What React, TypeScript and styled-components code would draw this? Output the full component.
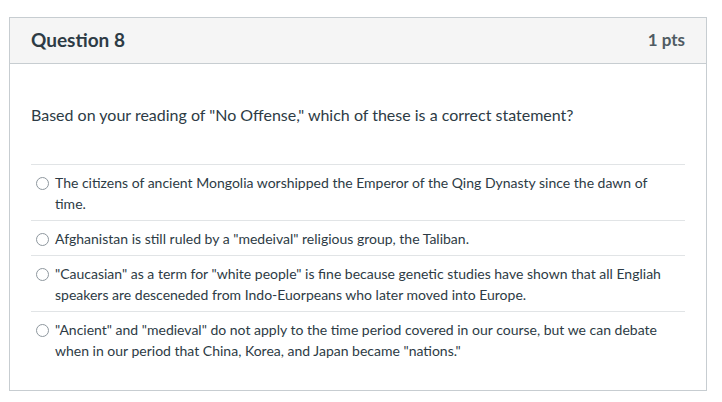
import { createGlobalStyle, styled } from 'styled-components';

const GlobalStyle = createGlobalStyle`
  body {
    margin: 0;
    background: #fff;
    font-family: Lato, 'Open Sans', sans-serif;
    color: #2d3b45;
  }
`;

const Page = styled.div`
  padding: 17px 15px 0 9px;
`;

const Card = styled.div`
  border: 1px solid #c7cdd1;
  height: 374px;
  box-sizing: border-box;
`;

const Header = styled.div`
  display: flex;
  justify-content: space-between;
  align-items: center;
  height: 45px;
  padding: 0 21px;
  background: #f5f5f5;
  border-bottom: 1px solid #c7cdd1;
`;

const Title = styled.h2`
  margin: 0 0 2px;
  font-size: 19px;
  font-weight: 700;
`;

const Points = styled.span`
  margin-bottom: 2px;
  font-size: 17px;
  font-weight: 700;
  color: #4f5b63;
`;

const Body = styled.div`
  padding: 40px 21px 0;
`;

const Prompt = styled.p`
  margin: 0 0 38px;
  font-size: 16px;
  line-height: 22px;
`;

const Answers = styled.div`
  border-top: 1px solid #e1e4e6;
`;

const Answer = styled.label`
  display: flex;
  align-items: flex-start;
  gap: 6px;
  padding: 7px 18px 6px 5px;
  border-bottom: 1px solid #e1e4e6;
  font-size: 14px;
  line-height: 21px;
  &:last-child {
    border-bottom: 0;
  }
`;

const Radio = styled.span`
  flex: none;
  box-sizing: border-box;
  width: 13px;
  height: 13px;
  margin-top: 5px;
  border: 1px solid #8e979e;
  border-radius: 50%;
  background: #fff;
`;

const answers = [
  'The citizens of ancient Mongolia worshipped the Emperor of the Qing Dynasty since the dawn of time.',
  'Afghanistan is still ruled by a "medeival" religious group, the Taliban.',
  '"Caucasian" as a term for "white people" is fine because genetic studies have shown that all Engliah speakers are desceneded from Indo-Euorpeans who later moved into Europe.',
  '"Ancient" and "medieval" do not apply to the time period covered in our course, but we can debate when in our period that China, Korea, and Japan became "nations."',
];

export default function App() {
  return (
    <>
      <GlobalStyle />
      <Page>
        <Card>
          <Header>
            <Title>Question 8</Title>
            <Points>1 pts</Points>
          </Header>
          <Body>
            <Prompt>
              Based on your reading of "No Offense," which of these is a correct
              statement?
            </Prompt>
            <Answers>
              {answers.map((a) => (
                <Answer key={a}>
                  <Radio />
                  <span>{a}</span>
                </Answer>
              ))}
            </Answers>
          </Body>
        </Card>
      </Page>
    </>
  );
}
